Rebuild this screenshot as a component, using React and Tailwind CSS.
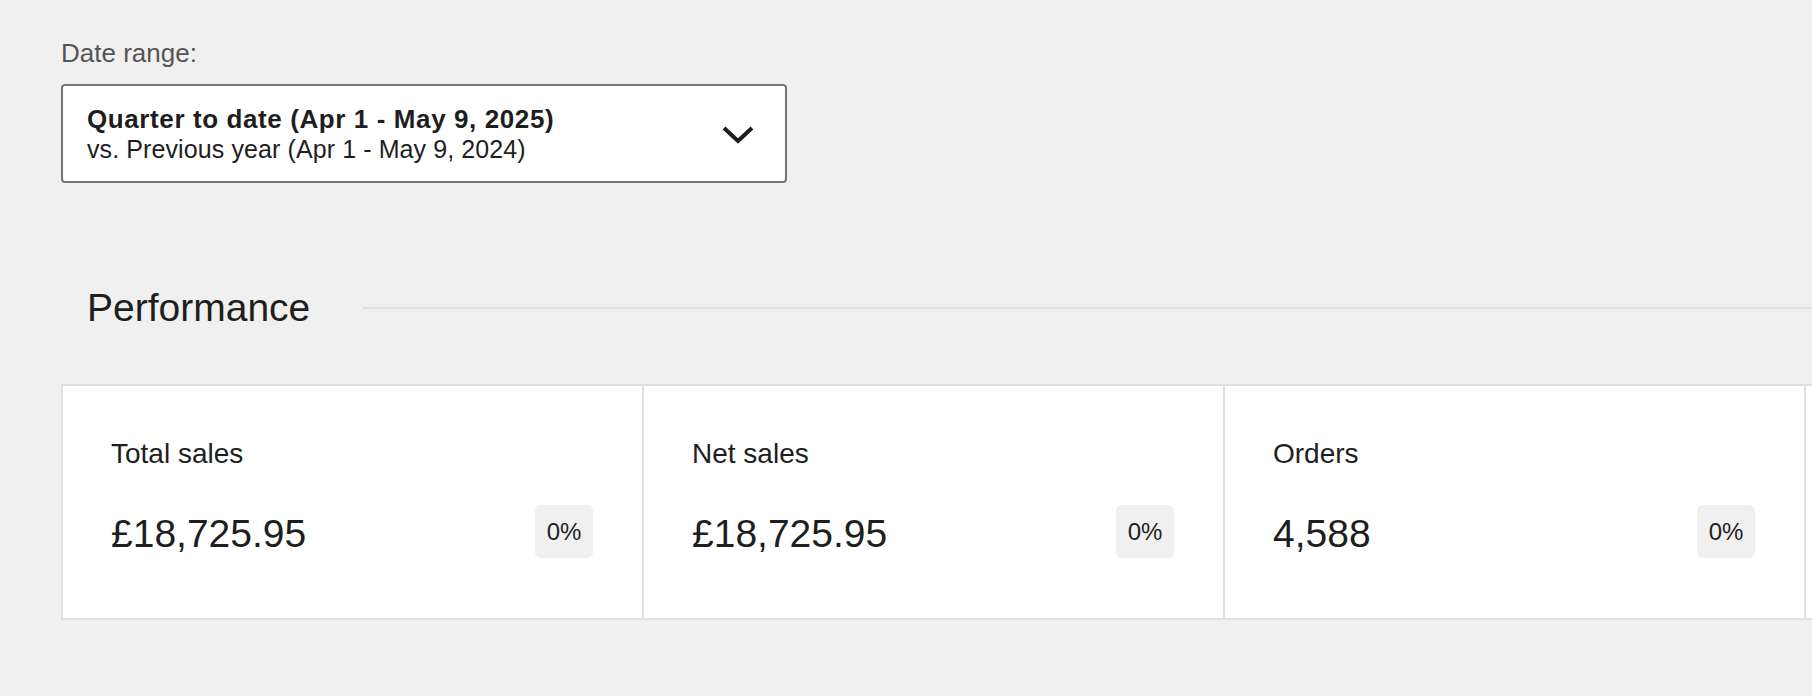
import React from "react";

const stats = [
  { label: "Total sales", value: "£18,725.95", delta: "0%" },
  { label: "Net sales", value: "£18,725.95", delta: "0%" },
  { label: "Orders", value: "4,588", delta: "0%" },
];

function ChevronDown() {
  return (
    <svg width="32" height="20" viewBox="0 0 32 20" fill="none">
      <polyline
        points="2,4 16,17 30,4"
        stroke="#1e1e1e"
        strokeWidth="4"
        strokeLinejoin="miter"
      />
    </svg>
  );
}

function StatCard({ label, value, delta }) {
  return (
    <div className="w-[581px] shrink-0 border-r-2 border-[#e0e0e0] bg-white pl-[48px] pr-[49px] pt-[48px] pb-[60px]">
      <div className="text-[28px] leading-[40px] text-[#1e1e1e]">{label}</div>
      <div className="mt-[31px] flex items-start justify-between">
        <div className="mt-[7px] text-[39px] leading-[44px] text-[#1e1e1e]">
          {value}
        </div>
        <div className="flex h-[53px] w-[58px] items-center justify-center rounded-[6px] bg-[#f0f0f0] text-[24px] text-[#1e1e1e]">
          {delta}
        </div>
      </div>
    </div>
  );
}

export default function App() {
  return (
    <div
      className="h-[696px] w-screen overflow-hidden bg-[#f0f0f0] pl-[61px] pt-[35px]"
      style={{ fontFamily: '"Liberation Sans", Arial, sans-serif' }}
    >
      {/* Date range picker */}
      <div className="text-[26px] leading-[36px] text-[#555555]">Date range:</div>
      <button
        type="button"
        className="mt-[13px] flex h-[99px] w-[726px] items-center justify-between rounded-[4px] border-2 border-[#757575] bg-white pl-[24px] pr-[31px] text-left"
      >
        <div>
          <div className="text-[26px] font-bold leading-[30px] tracking-[0.6px] text-[#1e1e1e]">
            Quarter to date (Apr 1 - May 9, 2025)
          </div>
          <div className="text-[25px] leading-[30px] tracking-[0.1px] text-[#1e1e1e]">
            vs. Previous year (Apr 1 - May 9, 2024)
          </div>
        </div>
        <ChevronDown />
      </button>

      {/* Performance header */}
      <div className="mt-[101px] flex items-center">
        <h2 className="pl-[26px] text-[39px] font-normal leading-[48px] text-[#1e1e1e]">
          Performance
        </h2>
        <div className="ml-[53px] h-[2px] flex-1 bg-[#e0e0e0]" />
      </div>

      {/* Stat cards */}
      <div className="mt-[52px] flex w-max border-y-2 border-l-2 border-[#e0e0e0]">
        {stats.map((s) => (
          <StatCard key={s.label} {...s} />
        ))}
        <div className="w-[581px] shrink-0 bg-white" />
      </div>
    </div>
  );
}
